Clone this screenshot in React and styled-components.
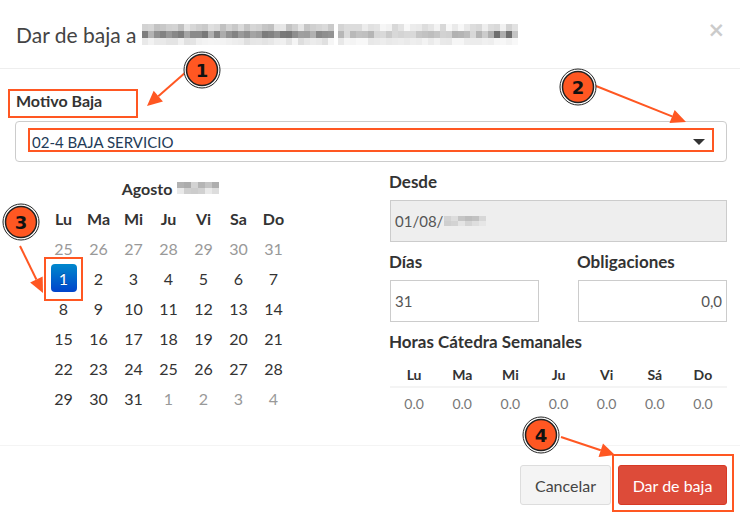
import React from 'react';
import styled, { createGlobalStyle } from 'styled-components';

const GlobalStyle = createGlobalStyle`
  html, body {
    margin: 0;
    background: #fff;
  }
  body {
    font-family: Lato, "Liberation Sans", sans-serif;
    color: #333;
  }
`;

const ORANGE = '#ff5722';

const Page = styled('div')`
  position: relative;
  width: 740px;
  height: 519px;
  overflow: hidden;
  background: #fff;
`;

const Header = styled('div')`
  display: flex;
  align-items: center;
  justify-content: space-between;
  height: 68px;
  padding: 0 15px 0 16px;
  border-bottom: 1px solid #eee;
`;

const Title = styled('h4')`
  display: flex;
  align-items: center;
  margin: 0;
  font-size: 21px;
  font-weight: 400;
  color: #444;
`;

const Close = styled('span')`
  font-family: "DejaVu Sans", sans-serif;
  font-size: 21px;
  font-weight: 700;
  color: #000;
  opacity: 0.2;
  line-height: 1;
  margin-top: -8px;
`;

const Body = styled('div')`
  padding: 21px 13px 0 15px;
`;

const Label = styled('label')`
  display: block;
  font-size: ${p => (p.$small ? 16 : 17)}px;
  font-weight: 700;
  line-height: 22px;
  color: #333;
  margin: 0 0 ${p => p.$gap || 8}px ${p => (p.$small ? 1 : -1)}px;
`;

const Select = styled('div')`
  display: flex;
  align-items: center;
  justify-content: space-between;
  height: 39px;
  padding: 0 21px 0 16px;
  border: 1px solid #ccc;
  border-radius: 4px;
  font-size: 15px;
  color: #233b57;
`;

const Caret = styled('span')`
  width: 0;
  height: 0;
  border-left: 6px solid transparent;
  border-right: 6px solid transparent;
  border-top: 6px solid #333;
`;

const Columns = styled('div')`
  display: grid;
  grid-template-columns: 375px 1fr;
  margin-top: 9px;
  padding-bottom: 27px;
`;

const Calendar = styled('div')`
  display: grid;
  grid-template-columns: repeat(7, 35px);
  grid-auto-rows: 30px;
  margin: 2px 0 0 31px;
  font-size: 16px;
`;

const CalTitle = styled('div')`
  grid-column: 1 / span 7;
  display: flex;
  align-items: center;
  justify-content: center;
  gap: 5px;
  font-weight: 700;
  padding-left: 4px;
`;

const Cell = styled('div')`
  display: flex;
  align-items: center;
  justify-content: center;
  font-weight: ${p => (p.$head ? 700 : 400)};
  color: ${p => (p.$muted ? '#999' : '#333')};
`;

const Active = styled('span')`
  display: flex;
  align-items: center;
  justify-content: center;
  width: 26px;
  height: 28px;
  border-radius: 4px;
  color: #fff;
  background: linear-gradient(to bottom, #0088cc, #0044cc);
  text-shadow: 0 -1px 0 rgba(0, 0, 0, 0.25);
`;

const Right = styled('div')`
  display: flex;
  flex-direction: column;
`;

const Input = styled('div')`
  display: flex;
  align-items: center;
  justify-content: ${p => (p.$right ? 'flex-end' : 'flex-start')};
  gap: 1px;
  height: 40px;
  padding: 0 4px 0 4px;
  border: 1px solid #ccc;
  background: ${p => (p.$disabled ? '#eee' : '#fff')};
  font-size: 15px;
  color: #555;
  margin-bottom: 9px;
`;

const Pair = styled('div')`
  display: grid;
  grid-template-columns: 149px 149px;
  justify-content: space-between;
`;

const Table = styled('div')`
  display: grid;
  grid-template-columns: repeat(7, 1fr);
  margin-top: 1px;
`;

const Th = styled('div')`
  display: flex;
  align-items: center;
  justify-content: center;
  height: 24px;
  border-bottom: 2px solid #f4f4f4;
  font-size: 14px;
  font-weight: 700;
  color: #333;
`;

const Td = styled('div')`
  display: flex;
  align-items: center;
  justify-content: center;
  height: 30px;
  font-size: 14px;
  color: #777;
`;

const Footer = styled('div')`
  display: flex;
  justify-content: flex-end;
  gap: 7px;
  padding: 19px 13px 0 15px;
  border-top: 1px solid #f4f4f4;
`;

const Button = styled('button')`
  height: 40px;
  padding: 0;
  border-radius: 3px;
  font-family: inherit;
  font-size: 16px;
  white-space: nowrap;
  border: 1px solid ${p => (p.$danger ? '#d73925' : '#ddd')};
  background: ${p => (p.$danger ? '#dd4b39' : '#f4f4f4')};
  color: ${p => (p.$danger ? '#fff' : '#444')};
  width: ${p => p.$w}px;
`;

const Overlay = styled('svg')`
  position: absolute;
  left: 0;
  top: 0;
  pointer-events: none;
`;

const BlurGrid = styled('span')`
  display: inline-grid;
  grid-template-columns: repeat(${p => p.$cols}, ${p => p.$cell}px);
  grid-auto-rows: ${p => p.$rowH}px;
`;

const rand = seed => {
  let s = seed;
  return () => {
    s = (s * 9301 + 49297) % 233280;
    return s / 233280;
  };
};

// pixelated placeholder for hidden personal data
const Blur = ({ cols, cell, rowH, ranges, seed, dark = [] }) => {
  const r = rand(seed);
  const cells = [];
  ranges.forEach((range, row) => {
    for (let c = 0; c < cols; c++) {
      let v = Math.round(range[0] + r() * (range[1] - range[0]));
      if (row === 1 && dark.includes(c)) v = 110;
      cells.push(<span key={row + '-' + c} style={{ background: `rgb(${v},${v},${v})` }} />);
    }
  });
  return <BlurGrid $cols={cols} $cell={cell} $rowH={rowH}>{cells}</BlurGrid>;
};

const Arrow = ({ x1, y1, x2, y2 }) => {
  const dx = x2 - x1;
  const dy = y2 - y1;
  const len = Math.hypot(dx, dy);
  const ux = dx / len;
  const uy = dy / len;
  const bx = x2 - ux * 15;
  const by = y2 - uy * 15;
  const px = -uy * 7;
  const py = ux * 7;
  return (
    <g>
      <line x1={x1} y1={y1} x2={bx} y2={by} stroke={ORANGE} strokeWidth="2" />
      <polygon points={`${x2},${y2} ${bx + px},${by + py} ${bx - px},${by - py}`} fill={ORANGE} />
    </g>
  );
};

const Badge = ({ x, y, n }) => (
  <g>
    <circle cx={x} cy={y} r="18" fill="#fff" stroke="#222" strokeWidth="1" />
    <circle cx={x} cy={y} r="15.5" fill={ORANGE} stroke="#222" strokeWidth="1.5" />
    <text
      x={x}
      y={y + 6.5}
      textAnchor="middle"
      fontFamily="DejaVu Sans, sans-serif"
      fontWeight="700"
      fontSize="18"
      fill="#111"
    >
      {n}
    </text>
  </g>
);

const Mark = ({ x, y, w, h }) => (
  <rect x={x} y={y} width={w} height={h} fill="none" stroke={ORANGE} strokeWidth="2" />
);

const DAYS = ['Lu', 'Ma', 'Mi', 'Ju', 'Vi', 'Sa', 'Do'];
const WEEKS = [
  [25, 26, 27, 28, 29, 30, 31],
  [1, 2, 3, 4, 5, 6, 7],
  [8, 9, 10, 11, 12, 13, 14],
  [15, 16, 17, 18, 19, 20, 21],
  [22, 23, 24, 25, 26, 27, 28],
  [29, 30, 31, 1, 2, 3, 4]
];

export default function App() {
  return (
    <Page>
      <GlobalStyle />
      <Header>
        <Title>
          Dar de baja a&nbsp;
          <Blur cols={32} cell={6} rowH={7} seed={7} ranges={[[190, 232], [115, 180], [222, 246]]} />
          <span style={{ width: 4 }} />
          <Blur
            cols={30}
            cell={6}
            rowH={7}
            seed={21}
            ranges={[[210, 248], [170, 222], [232, 250]]}
            dark={[26, 28]}
          />
        </Title>
        <Close>×</Close>
      </Header>
      <Body>
        <Label $small $gap={9}>Motivo Baja</Label>
        <Select>
          02-4 BAJA SERVICIO
          <Caret />
        </Select>
        <Columns>
          <Calendar>
            <CalTitle>
              Agosto
              <Blur cols={6} cell={7} rowH={6} seed={3} ranges={[[160, 215], [185, 235]]} />
            </CalTitle>
            {DAYS.map(d => (
              <Cell key={d} $head>
                {d}
              </Cell>
            ))}
            {WEEKS.map((week, wi) =>
              week.map((day, di) => {
                const muted = (wi === 0 && day > 7) || (wi === 5 && day < 7);
                return (
                  <Cell key={wi + '-' + di} $muted={muted}>
                    {wi === 1 && day === 1 ? <Active>1</Active> : day}
                  </Cell>
                );
              })
            )}
          </Calendar>
          <Right>
            <Label $gap={7}>Desde</Label>
            <Input $disabled>
              01/08/
              <Blur cols={6} cell={7} rowH={5} seed={11} ranges={[[185, 225], [200, 235]]} />
            </Input>
            <Pair>
              <div>
                <Label $gap={7}>Días</Label>
                <Input>31</Input>
              </div>
              <div>
                <Label $gap={7}>Obligaciones</Label>
                <Input $right>0,0</Input>
              </div>
            </Pair>
            <Label $gap={0}>Horas Cátedra Semanales</Label>
            <Table>
              {['Lu', 'Ma', 'Mi', 'Ju', 'Vi', 'Sá', 'Do'].map(d => (
                <Th key={d}>{d}</Th>
              ))}
              {DAYS.map(d => (
                <Td key={d}>0.0</Td>
              ))}
            </Table>
          </Right>
        </Columns>
      </Body>
      <Footer>
        <Button $w={91}>Cancelar</Button>
        <Button $danger $w={109}>
          Dar de baja
        </Button>
      </Footer>
      <Overlay width="740" height="519" viewBox="0 0 740 519">
        <Mark x={9} y={90} w={128} h={27} />
        <Mark x={29} y={129} w={684} h={22} />
        <Mark x={45} y={258} w={37} h={42} />
        <Mark x={613} y={455} w={120} h={56} />
        <Arrow x1={186} y1={72} x2={147} y2={106} />
        <Arrow x1={596} y1={86} x2={686} y2={122} />
        <Arrow x1={20} y1={246} x2={43} y2={293} />
        <Arrow x1={561} y1={437} x2={615} y2={455} />
        <Badge x={202} y={70} n="1" />
        <Badge x={578} y={87} n="2" />
        <Badge x={21} y={222} n="3" />
        <Badge x={541} y={435} n="4" />
      </Overlay>
    </Page>
  );
}
